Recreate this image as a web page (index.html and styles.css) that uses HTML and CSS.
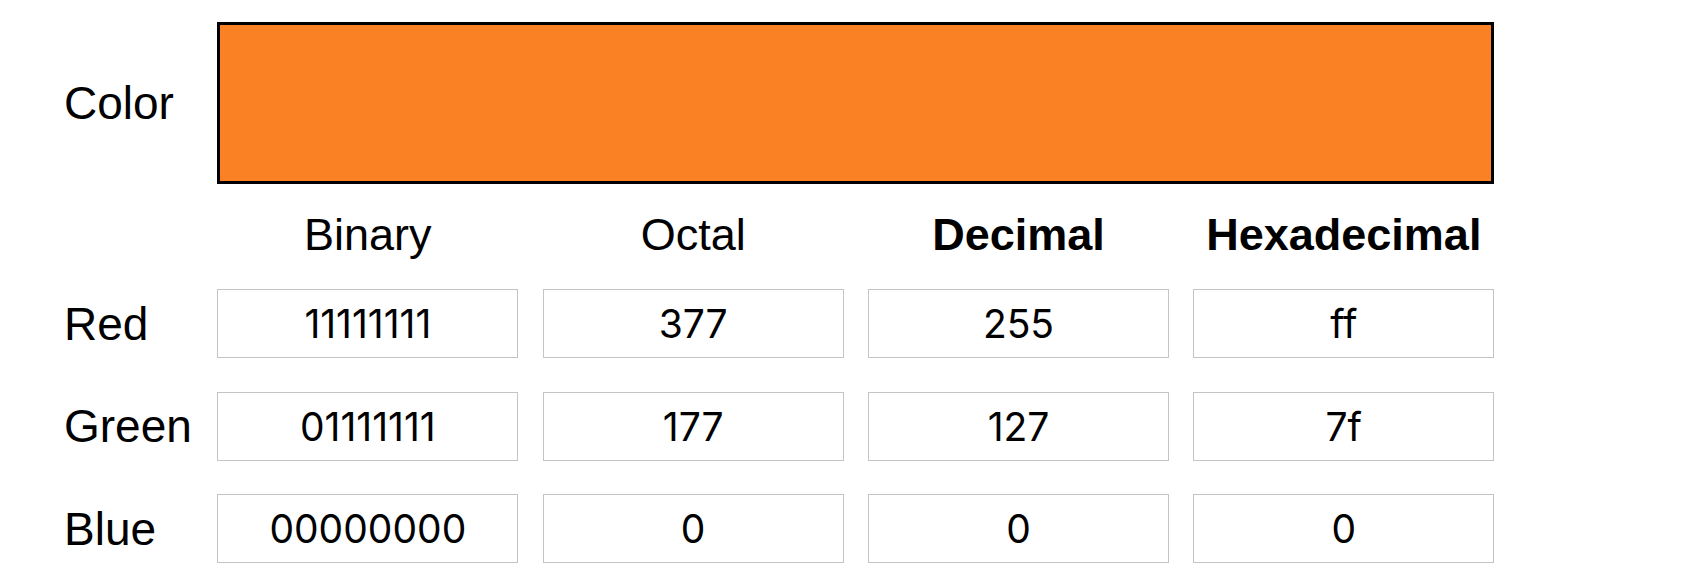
FILE: index.html
```html
<!DOCTYPE html>
<html lang="en">
<head>
<meta charset="utf-8">
<title>Color converter</title>
<link rel="stylesheet" href="styles.css">
</head>
<body>
<main class="converter">
  <div class="label label-color">Color</div>
  <div class="swatch"></div>

  <div class="corner"></div>
  <div class="head">Binary</div>
  <div class="head">Octal</div>
  <div class="head head-bold">Decimal</div>
  <div class="head head-bold">Hexadecimal</div>

  <div class="label">Red</div>
  <input class="value" type="text" value="11111111">
  <input class="value" type="text" value="377">
  <input class="value" type="text" value="255">
  <input class="value" type="text" value="ff">

  <div class="label">Green</div>
  <input class="value" type="text" value="01111111">
  <input class="value" type="text" value="177">
  <input class="value" type="text" value="127">
  <input class="value" type="text" value="7f">

  <div class="label">Blue</div>
  <input class="value" type="text" value="00000000">
  <input class="value" type="text" value="0">
  <input class="value" type="text" value="0">
  <input class="value" type="text" value="0">
</main>
</body>
</html>
```

FILE: styles.css
```css
html, body {
  margin: 0;
  padding: 0;
  background: #ffffff;
}

body {
  font-family: "Liberation Sans", Arial, sans-serif;
  color: #000000;
}

.converter {
  display: grid;
  grid-template-columns: 129px repeat(4, 301px);
  grid-template-rows: 162px 38px 69px 69px 69px;
  column-gap: 24.33px;
  row-gap: 33.5px;
  padding: 22px 0 0 64px;
  align-items: center;
}

.label {
  font-size: 46px;
  line-height: 46px;
  white-space: nowrap;
}

.swatch {
  grid-column: 2 / span 4;
  align-self: stretch;
  box-sizing: border-box;
  border: 3px solid #000000;
  background: #fb8224;
}

.head {
  font-size: 45px;
  line-height: 38px;
  margin-bottom: 4px;
  text-align: center;
  white-space: nowrap;
}

.head-bold {
  font-weight: 700;
}

.value {
  box-sizing: border-box;
  width: 100%;
  height: 69px;
  margin: 0;
  padding: 0;
  border: 1px solid #c4c4c4;
  border-radius: 0;
  background: #ffffff;
  color: #000000;
  font-family: Inter, "Noto Sans", sans-serif;
  font-size: 39px;
  text-align: center;
  outline: none;
}
```
